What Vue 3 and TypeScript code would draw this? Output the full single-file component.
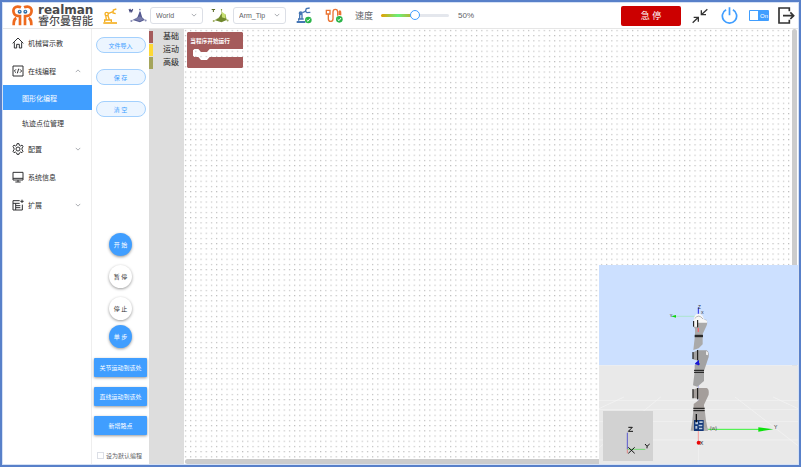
<script setup lang="ts">
import { ref } from 'vue'

interface MenuItem {
  label: string
  icon?: 'home' | 'code' | 'gear' | 'screen' | 'extend'
  arrow?: 'up' | 'down'
  sub?: boolean
  active?: boolean
}

const menu: MenuItem[] = [
  { label: '机械臂示教', icon: 'home' },
  { label: '在线编程', icon: 'code', arrow: 'up' },
  { label: '图形化编程', sub: true, active: true },
  { label: '轨迹点位管理', sub: true },
  { label: '配置', icon: 'gear', arrow: 'down' },
  { label: '系统信息', icon: 'screen' },
  { label: '扩展', icon: 'extend', arrow: 'down' },
]

const categories = [
  { name: '基础', tone: 'red' },
  { name: '运动', tone: 'yellow' },
  { name: '高级', tone: 'olive' },
]

const runButtons = [
  { label: '开 始', primary: true },
  { label: '暂 停', primary: false },
  { label: '停 止', primary: false },
  { label: '单 步', primary: true },
]

const speed = ref(50)
const powered = ref(true)
const isDefault = ref(false)
const workFrame = ref('World')
const toolFrame = ref('Arm_Tip')
</script>

<template>
  <div class="frame">
    <header class="topbar">
      <a class="logo" href="#">
        <svg class="mark" viewBox="0 0 63 63" aria-hidden="true">
          <g fill="none" stroke="#ee6a1e" stroke-width="8">
            <path d="M27 7 C8 -1 1 14 6 25 C8 32 16 33 24 33 V61" />
            <path d="M36 7 C55 -1 62 14 57 25 C55 32 47 33 39 33 V61" />
            <path d="M13 39 C5 43 5 50 5 61" />
            <path d="M50 39 C58 43 58 50 58 61" />
          </g>
          <path d="M17 12 h29 l6 8 l-6 8 h-29 l-6 -8z" fill="#fff" />
          <circle cx="23" cy="20" r="6" fill="#2f6fa8" />
          <circle cx="40" cy="20" r="6" fill="#2f6fa8" />
          <circle cx="23" cy="19" r="2" fill="#fff" />
          <circle cx="40" cy="19" r="2" fill="#fff" />
        </svg>
        <span class="brand">
          <span class="brand-en">realman</span>
          <span class="brand-zh">睿尔曼智能</span>
        </span>
      </a>

      <button class="icon-btn arm" aria-label="机械臂">
        <svg viewBox="0 0 48 48" width="16" height="16" fill="none" stroke="#f5b023" stroke-width="4">
          <path d="M4 45 H45" stroke-width="5" />
          <path d="M8 42 V36 H28 V42 M13 35 L11 21 M22 35 L17 21 M18 17 L33 11" />
          <circle cx="14" cy="18" r="5" />
          <path d="M43 3 L34 6 L33 15 L41 17" />
        </svg>
      </button>

      <div class="field work">
        <svg viewBox="0 0 56 44" width="19" height="15" aria-hidden="true">
          <path d="M3 3 L6 11 L8 5 L11 11 L14 3" fill="none" stroke="#45487c" stroke-width="3" />
          <path d="M35 5 V24 M35 24 L12 37 M35 24 L51 36" fill="none" stroke="#a0a3c0" stroke-width="2" />
          <path d="M34 11 L27 29 L14 35 L35 42 L49 35 L42 28 L37 11z" fill="#555a91" />
          <path d="M35 24 L20 34 L35 39 L46 33z" fill="#777ba9" />
          <circle cx="35" cy="4" r="2" fill="#555a91" />
          <circle cx="10" cy="38" r="3" fill="#8c90b8" />
          <circle cx="52" cy="37" r="3" fill="#8c90b8" />
        </svg>
        <span class="select-box">
          <select v-model="workFrame" aria-label="工作坐标系"><option>World</option></select>
          <svg class="chev" viewBox="0 0 8 5"><path d="M1 1 L4 4 L7 1" /></svg>
        </span>
      </div>

      <div class="field tool">
        <svg viewBox="0 0 56 44" width="19" height="15" aria-hidden="true">
          <path d="M2 4 H12 M7 4 V12" fill="none" stroke="#5c6b28" stroke-width="3" />
          <path d="M31 5 V24 M31 24 L10 37 M31 24 L48 36" fill="none" stroke="#b1c078" stroke-width="2" />
          <path d="M30 17 L23 29 L12 36 L31 42 L46 35 L43 19z" fill="#70882d" />
          <path d="M32 11 L43 19 V31 L32 27z" fill="#c6df72" />
          <circle cx="31" cy="5" r="2" fill="#70882d" />
          <circle cx="8" cy="38" r="3" fill="#9fae60" />
          <circle cx="49" cy="37" r="3" fill="#9fae60" />
        </svg>
        <span class="select-box">
          <select v-model="toolFrame" aria-label="工具坐标系"><option>Arm_Tip</option></select>
          <svg class="chev" viewBox="0 0 8 5"><path d="M1 1 L4 4 L7 1" /></svg>
        </span>
      </div>

      <button class="icon-btn status" aria-label="机械臂状态">
        <svg viewBox="0 0 48 51" width="16" height="17" fill="none" stroke="#4676b4" stroke-width="4">
          <path d="M2 45 H28" stroke-width="6" />
          <path d="M8 41 V36 H23 M11 35 V22 M18 35 V22 M19 17 L31 12" />
          <circle cx="14" cy="19" r="4" fill="#4676b4" />
          <path d="M41 3 L31 5 L28 13 L33 17 L43 16" />
          <circle cx="37" cy="39" r="10" fill="#2bb44a" stroke="none" />
          <path d="M32 39 L36 43 L42 35" stroke="#fff" stroke-width="3" />
        </svg>
      </button>
      <button class="icon-btn cable" aria-label="连接状态">
        <svg viewBox="0 0 54 48" width="18" height="16" fill="none" stroke="#ea7332" stroke-width="4">
          <path d="M4 7 H15 V18 H4z M10 18 V32 Q10 40 17 40 Q24 40 24 32 V12 Q24 4 31 4 Q38 4 38 12 V23 M43 9 V21 M43 9 Q47 8 47 14 V22" />
          <circle cx="43" cy="34" r="10" fill="#2bb44a" stroke="none" />
          <path d="M38 34 L42 38 L48 30" stroke="#fff" stroke-width="3" />
        </svg>
      </button>

      <label class="speed-label" for="speed">速度</label>
      <input id="speed" v-model="speed" class="speed" type="range" min="0" max="100" />
      <output class="speed-value" for="speed">{{ speed }}%</output>

      <div class="actions">
        <button class="stop">急 停</button>
        <button class="icon-btn" aria-label="收起">
          <svg viewBox="0 0 48 48" width="16" height="16" fill="none" stroke="#333" stroke-width="4">
            <path d="M46 4 L28 20 M28 7 V20 H42 M2 44 L19 28 M5 28 H19 V41" />
          </svg>
        </button>
        <button class="icon-btn power" aria-label="电源">
          <svg viewBox="0 0 50 50" width="17" height="17" fill="none" stroke="#409eff" stroke-width="5">
            <path d="M15 8 A21 21 0 1 0 35 8 M25 1 V24" />
          </svg>
        </button>
        <label class="switch">
          <input v-model="powered" type="checkbox" aria-label="On" />
          <span class="knob"></span><span class="on">On</span>
        </label>
        <button class="icon-btn exit" aria-label="退出">
          <svg viewBox="0 0 51 51" width="17" height="17" fill="none" stroke="#333" stroke-width="5">
            <path d="M34 13 V3 H3 V48 H34 V38 M15 26 H46 M37 16 L47 26 L37 36" />
          </svg>
        </button>
      </div>
    </header>

    <div class="body">
      <nav class="sidebar">
        <a
          v-for="item in menu"
          :key="item.label"
          href="#"
          class="item"
          :class="{ sub: item.sub, active: item.active }"
        >
          <svg v-if="item.icon" class="glyph" viewBox="0 0 36 36">
            <path v-if="item.icon === 'home'" d="M2 19 L18 3 L34 19 M7 16 V33 H14 V22 H22 V33 H29 V16" />
            <path v-else-if="item.icon === 'code'" d="M3 3 H33 V33 H3z M12 13 L7 18 L12 23 M24 13 L29 18 L24 23 M20 11 L16 25" />
            <g v-else-if="item.icon === 'gear'">
              <path d="M15 2 H21 L22 7 L26 9 L30 6 L33 11 L30 15 V20 L33 25 L30 29 L26 27 L22 30 L21 34 H15 L14 30 L10 27 L6 29 L3 25 L6 20 V15 L3 11 L6 6 L10 9 L14 7z" />
              <circle cx="18" cy="18" r="6" />
            </g>
            <path v-else-if="item.icon === 'screen'" d="M3 4 H33 V27 H3z M3 22 H33 M18 27 V33 M10 33 H26" />
            <path v-else d="M23 5 H3 V33 H31 V17 M3 13 H23 M12 20 H25 M12 26 H25 M11 13 V33 M30 2 V12 M25 7 H35" />
          </svg>
          <span>{{ item.label }}</span>
          <svg v-if="item.arrow" class="arrow" :class="item.arrow" viewBox="0 0 8 5"><path d="M1 1 L4 4 L7 1" /></svg>
        </a>
      </nav>

      <section class="controls">
        <div class="files">
          <button class="pill">文件导入</button>
          <button class="pill">保 存</button>
          <button class="pill">清 空</button>
        </div>
        <div class="runs">
          <button v-for="b in runButtons" :key="b.label" class="round" :class="{ primary: b.primary }">{{ b.label }}</button>
        </div>
        <div class="moves">
          <button class="move">关节运动到该处</button>
          <button class="move">直线运动到该处</button>
          <button class="move">新增路点</button>
        </div>
        <label class="default"><input v-model="isDefault" type="checkbox" />设为默认编程</label>
      </section>

      <aside class="toolbox">
        <button v-for="c in categories" :key="c.name" class="category" :class="c.tone">{{ c.name }}</button>
      </aside>

      <main class="workspace">
        <svg class="dots" aria-hidden="true">
          <defs>
            <pattern id="grid" width="5.2" height="5.2" patternUnits="userSpaceOnUse">
              <rect x="1" y="1" width="1" height="1" fill="#a6a6a6" />
            </pattern>
          </defs>
          <rect width="100%" height="100%" fill="url(#grid)" />
        </svg>
        <svg class="block" viewBox="0 0 168 108">
          <path
            d="M3 0 H165 L168 3 V51 H68 L60 60 H42 L34 51 H22 L18 55 V71 L22 75 H34 L42 84 H60 L68 75 H168 V105 L165 108 H3 L0 105 V3z"
            fill="#a55b5b"
          />
          <text x="10" y="33" font-size="17" font-weight="700" fill="#fff">当程序开始运行</text>
        </svg>
        <div class="vbar"></div>
        <div class="hbar"></div>

        <svg class="scene" viewBox="27 15 597 597">
          <rect x="27" y="15" width="597" height="301" fill="#cce0ff" />
          <rect x="27" y="316" width="597" height="296" fill="#e9e9e9" />
          <g fill="none" stroke="#f5f5f5" stroke-width="2">
            <path d="M27 421 H624 M27 448 H624 M27 484 H624 M27 540 H624 M102 411 L27 446 M212 411 L27 563 M435 411 L624 557 M549 411 L624 446 M325 411 V612" />
          </g>
          <path d="M325 508 H510" stroke="#35f335" stroke-width="3" />
          <path d="M505 502 L550 508 L505 515z" fill="#0be20b" />
          <path d="M258 169 H318" stroke="#9de7b7" stroke-width="2" />
          <path d="M243 169 L258 165 V173z" fill="#0bd50b" />
          <path d="M325 142 V162" stroke="#2525e8" stroke-width="3" />
          <path d="M325 510 V546" stroke="#f49b9b" stroke-width="3" />
          <circle cx="326" cy="548" r="6" fill="#e80808" />
          <path d="M325 418 V440 M325 370 V386" stroke="#b7b7ef" stroke-width="3" />
          <path d="M311 440 H343 L348 482 L354 512 H302 L307 482z" fill="#a9a6a5" />
          <path d="M308 390 L322 384 H350 Q358 386 356 404 L342 434 V446 H311 V432 L326 421 V416 L308 414z" fill="#a49e9b" />
          <path d="M308 278 L322 271 H350 Q358 275 356 291 L342 333 V363 L322 380 L309 376 L314 335 V316 L325 302 L308 298z" fill="#a3a3a3" />
          <path d="M312 185 Q322 174 349 179 Q354 187 349 199 L338 222 V253 L326 265 L310 270 L315 225 V206 L310 199z" fill="#aaa" />
          <path d="M311 184 Q311 162 325 161 Q341 163 341 178 L351 182 V188 H322 V200 H312z" fill="#f7f7f7" />
          <path d="M314 176 Q326 160 339 177" fill="none" stroke="#b8b8b8" stroke-width="3" />
          <path d="M325 204 V216" stroke="#f06b75" stroke-width="4" />
          <path d="M311 183 V200 M323 180 V202 M309 276 V297 M323 270 V301 M309 387 V415 M323 384 V418" stroke="#080808" stroke-width="3" />
          <path d="M314 226 H339 M314 230 H339 M312 331 H342 M312 337 H342 M310 445 H344 M310 452 H344" stroke="#111" stroke-width="3" />
          <path d="M316 312 L325 304 V316 M319 312 H329" fill="none" stroke="#1515d5" stroke-width="4" />
          <path d="M348 273 L354 277 V286 L348 284z" fill="#eee" />
          <path d="M312 480 H341 V513 H312z" fill="#123779" />
          <path d="M316 485 H324 V493 H316z M328 484 H338 V489 H328z M316 498 H322 V506 H316z M326 494 H337 V499 H326z M327 503 H337 V508 H327z" fill="#b9c9de" />
          <path d="M319 462 V487" stroke="#101010" stroke-width="4" />
          <path d="M341 500 L357 509 L344 512z" fill="#b0b0b0" />
          <g font-size="14" fill="#222">
            <text x="324" y="146" fill="#334">Z</text>
            <text x="239" y="170" font-size="12">Y</text>
            <text x="333" y="163" font-size="12">X</text>
            <text x="552" y="507" font-size="15">Y</text>
            <text x="329" y="554" font-size="16">X</text>
            <text x="359" y="511" font-size="16" fill="#555">(w)</text>
          </g>
          <rect x="39" y="453" width="150" height="150" fill="#d2d2d2" />
          <path d="M112 518 V568" stroke="#5959ce" stroke-width="3" />
          <path d="M112 568 H166" stroke="#72d772" stroke-width="3" />
          <path d="M112 568 V580" stroke="#e08585" stroke-width="3" />
          <g fill="none" stroke="#111" stroke-width="3">
            <path d="M115 502 H127 L115 514 H129 M165 552 L171 559 L179 552 M171 559 V565 M115 562 L134 580 M134 562 L115 580" />
          </g>
        </svg>
      </main>
    </div>
  </div>
</template>

<style>
body {
  background: #fff;
}
</style>

<style scoped>
.frame {
  box-sizing: border-box;
  display: flex;
  flex-direction: column;
  min-height: calc(100vh - 1px);
  margin: 0 1px 1px 0;
  padding: 1px;
  border: 2px solid #5880c9;
  background: linear-gradient(#fff, #fff) content-box, #d5e1f5;
  font-family: "Liberation Sans", "Noto Sans CJK SC", sans-serif;
  font-size: 7px;
  color: #303133;
}
button,
input,
select {
  font: inherit;
  color: inherit;
  margin: 0;
  padding: 0;
  border: 0;
  background: none;
  box-sizing: border-box;
}
button {
  cursor: pointer;
  white-space: nowrap;
}
a {
  color: inherit;
  text-decoration: none;
}
svg {
  display: block;
  flex: none;
}

.topbar {
  display: flex;
  align-items: center;
  height: 25px;
  border-bottom: 1px solid #e6e6e6;
}
.logo {
  display: flex;
  align-items: center;
  gap: 5px;
  width: 81px;
  margin-left: 9px;
}
.mark {
  width: 21px;
  height: 21px;
}
.brand {
  display: flex;
  flex-direction: column;
  color: #4a4a4c;
  white-space: nowrap;
}
.brand-en {
  font: bold 12px/12px "DejaVu Sans", sans-serif;
}
.brand-zh {
  font-size: 11px;
  line-height: 11px;
  font-weight: 500;
}
.arm {
  margin-left: 9px;
}
.field {
  display: flex;
  align-items: center;
  gap: 3px;
}
.work {
  margin-left: 10px;
}
.tool {
  margin-left: 8px;
}
.select-box {
  position: relative;
  width: 53px;
}
.select-box select {
  appearance: none;
  display: block;
  width: 100%;
  height: 17px;
  padding-left: 5px;
  border: 1px solid #dcdfe6;
  border-radius: 3px;
  background: #fff;
  color: #606266;
  line-height: 15px;
}
.chev,
.arrow {
  width: 6px;
  height: 4px;
  fill: none;
  stroke: #909399;
}
.chev {
  position: absolute;
  right: 6px;
  top: 6px;
  pointer-events: none;
}
.status {
  margin-left: 10px;
}
.cable {
  margin-left: 13px;
}
.speed-label {
  margin-left: 12px;
  font-size: 9px;
  color: #606266;
}
.speed {
  appearance: none;
  width: 68px;
  height: 11px;
  margin-left: 8px;
}
.speed::-webkit-slider-runnable-track {
  height: 3px;
  border-radius: 2px;
  background: linear-gradient(90deg, #e6a000, #67f07c 25%, #c9a51c 50%, #e4e7ed 50%);
}
.speed::-webkit-slider-thumb {
  appearance: none;
  width: 10px;
  height: 10px;
  margin-top: -4px;
  border: 1px solid #409eff;
  border-radius: 50%;
  background: #fff;
}
.speed-value {
  margin-left: 9px;
  font-size: 8px;
  color: #606266;
}
.actions {
  display: flex;
  align-items: center;
  gap: 11px;
  margin-left: auto;
  margin-right: 3px;
}
.stop {
  width: 60px;
  height: 20px;
  border-radius: 2px;
  background: #c00;
  color: #fff;
  font-size: 9px;
}
.power {
  margin-left: 2px;
}
.switch {
  display: flex;
  align-items: center;
  position: relative;
  width: 20px;
  height: 11px;
  border-radius: 1px;
  background: #409eff;
  color: #fff;
  font-size: 6px;
}
.switch input {
  position: absolute;
  inset: 0;
  opacity: 0;
}
.knob {
  width: 8px;
  height: 9px;
  margin: 0 2px 0 1px;
  background: #fff;
}
.exit {
  margin-left: -2px;
}

.body {
  display: flex;
  flex: 1;
}
.sidebar {
  width: 89px;
  box-sizing: border-box;
  border-right: 1px solid #eee;
}
.item {
  display: flex;
  align-items: center;
  gap: 4px;
  height: 28px;
  padding: 0 10px 0 9px;
  white-space: nowrap;
}
.glyph {
  width: 12px;
  height: 12px;
  fill: none;
  stroke: #303133;
  stroke-width: 3;
}
.item.sub {
  height: 25px;
  padding-left: 19px;
}
.item.active {
  margin-right: -1px;
  background: #409eff;
  color: #fff;
}
.arrow {
  margin-left: auto;
}
.arrow.up {
  transform: rotate(180deg);
}

.controls {
  display: flex;
  flex-direction: column;
  align-items: center;
  width: 57px;
  font-size: 6px;
}
.files {
  display: flex;
  flex-direction: column;
  gap: 16px;
  padding-top: 8px;
}
.pill {
  width: 50px;
  height: 16px;
  border: 1px solid #a3d0fd;
  border-radius: 8px;
  background: #ecf5ff;
  color: #409eff;
}
.runs {
  display: flex;
  flex-direction: column;
  gap: 9px;
  margin-top: auto;
}
.round {
  width: 23px;
  height: 23px;
  border-radius: 50%;
  background: #fff;
  box-shadow: 0 1px 3px #0006;
}
.round:last-child {
  margin-top: -4px;
}
.primary,
.move {
  background: #409eff;
  color: #fff;
}
.moves {
  display: flex;
  flex-direction: column;
  gap: 10px;
  margin-top: 10px;
}
.move {
  width: 53px;
  height: 19px;
  border-radius: 1px;
  box-shadow: 0 1px 3px #0006;
}
.default {
  display: flex;
  align-items: center;
  gap: 2px;
  margin: 15px 2px 4px 0;
  height: 10px;
  color: #606266;
  white-space: nowrap;
}
.default input {
  appearance: none;
  width: 7px;
  height: 7px;
  border: 1px solid #dcdfe6;
}

.toolbox {
  display: flex;
  flex-direction: column;
  gap: 1px;
  width: 35px;
  padding-top: 2px;
  box-sizing: border-box;
  background: #ddd;
}
.category {
  height: 12px;
  padding-left: 10px;
  border-left: 4px solid;
  text-align: left;
  font-size: 8px;
  line-height: 12px;
  color: #222;
}
.category.red {
  border-left-color: #a55b5b;
}
.category.yellow {
  border-left-color: #fdd835;
}
.category.olive {
  border-left-color: #a5a55b;
}

.workspace {
  position: relative;
  flex: 1;
  overflow: hidden;
}
.dots {
  position: absolute;
  inset: 0;
  width: 100%;
  height: 100%;
}
.block {
  position: absolute;
  left: 3px;
  top: 3px;
  width: 56px;
  height: 36px;
}
.vbar,
.hbar {
  position: absolute;
  right: 1px;
  background: #ccc;
  border-radius: 3px;
}
.vbar {
  top: 0;
  bottom: 1px;
  width: 5px;
}
.hbar {
  left: 1px;
  bottom: 0;
  height: 5px;
}
.scene {
  position: absolute;
  right: 0;
  bottom: 0;
  width: 199px;
  height: 199px;
}
</style>
